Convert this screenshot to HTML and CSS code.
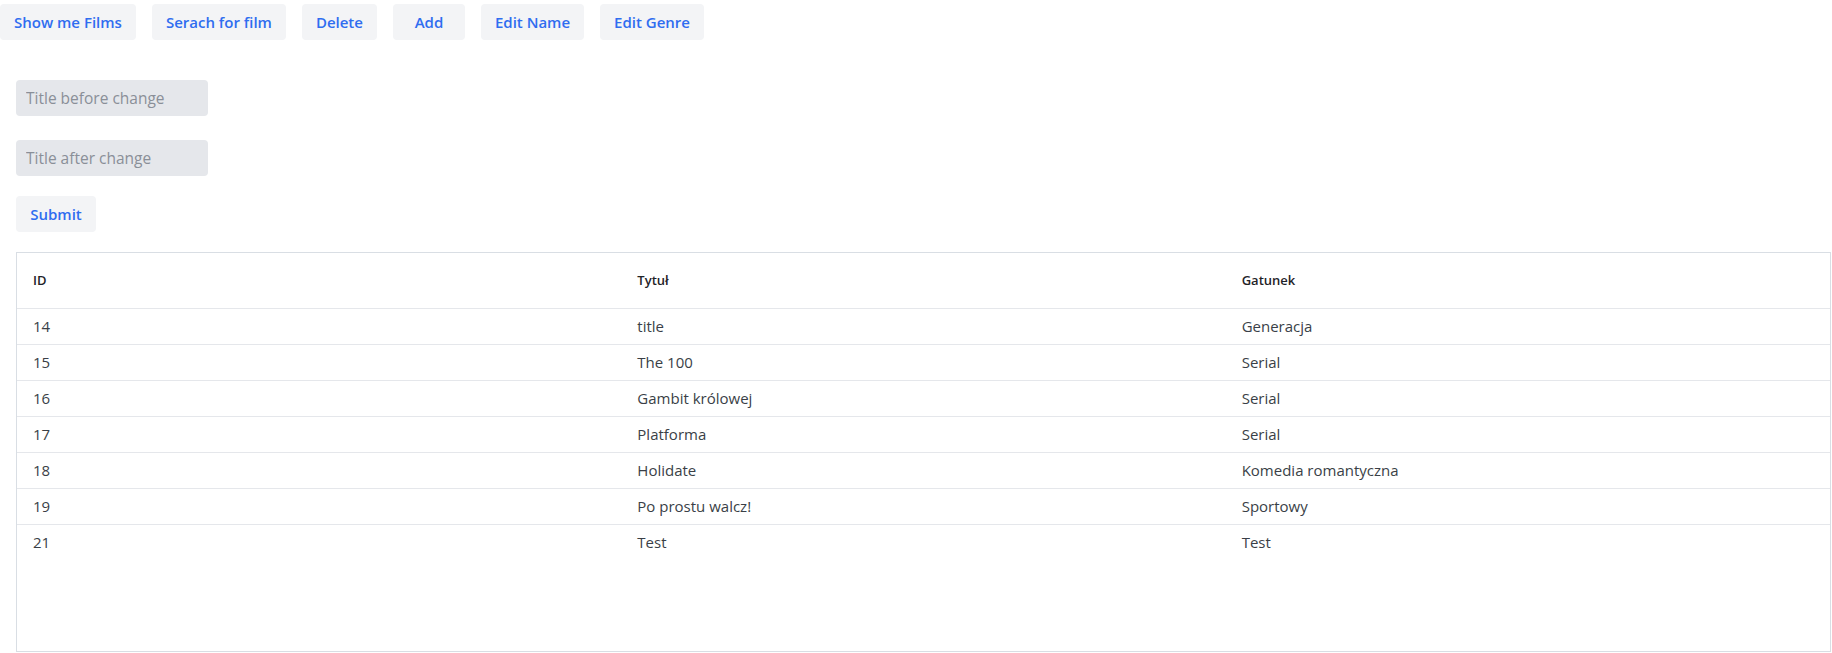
FILE: index.html
```html
<!DOCTYPE html>
<html lang="pl">
<head>
<meta charset="utf-8">
<title>Films</title>
<link rel="stylesheet" href="styles.css">
</head>
<body>
<nav class="toolbar">
  <button class="btn">Show me Films</button>
  <button class="btn">Serach for film</button>
  <button class="btn">Delete</button>
  <button class="btn btn-add">Add</button>
  <button class="btn">Edit Name</button>
  <button class="btn">Edit Genre</button>
</nav>
<main class="content">
  <form class="edit-form">
    <input class="field" type="text" placeholder="Title before change">
    <input class="field" type="text" placeholder="Title after change">
    <button class="btn submit" type="button">Submit</button>
  </form>
  <div class="table-box">
    <table class="films">
      <thead>
        <tr><th>ID</th><th>Tytuł</th><th>Gatunek</th></tr>
      </thead>
      <tbody>
        <tr><td>14</td><td>title</td><td>Generacja</td></tr>
        <tr><td>15</td><td>The 100</td><td>Serial</td></tr>
        <tr><td>16</td><td>Gambit królowej</td><td>Serial</td></tr>
        <tr><td>17</td><td>Platforma</td><td>Serial</td></tr>
        <tr><td>18</td><td>Holidate</td><td>Komedia romantyczna</td></tr>
        <tr><td>19</td><td>Po prostu walcz!</td><td>Sportowy</td></tr>
        <tr><td>21</td><td>Test</td><td>Test</td></tr>
      </tbody>
    </table>
  </div>
</main>
</body>
</html>
```
FILE: styles.css
```css
* { box-sizing: border-box; }
html, body { margin: 0; padding: 0; background: #fff; }
body {
  font-family: "Open Sans", "Noto Sans", "Liberation Sans", sans-serif;
  font-size: 15px;
  color: #374151;
}
.toolbar {
  display: flex;
  gap: 16px;
  padding-top: 4px;
}
.btn {
  height: 36px;
  padding: 0 14px;
  border: none;
  border-radius: 4px;
  background: #f3f4f6;
  color: #2f6df0;
  font-family: inherit;
  font-size: 15px;
  font-weight: 600;
  text-align: center;
  cursor: pointer;
}
.btn-add { min-width: 72px; }
.content {
  padding: 40px 1px 0 16px;
}
.edit-form {
  display: flex;
  flex-direction: column;
  align-items: flex-start;
}
.field {
  width: 192px;
  height: 36px;
  border: none;
  border-radius: 4px;
  background: #e5e7eb;
  padding: 0 10px;
  font-family: inherit;
  font-size: 15.5px;
  color: #374151;
  margin-bottom: 24px;
}
.field + .field { margin-bottom: 20px; }
.field::placeholder { color: #8a8f98; }
.submit { width: 80px; padding: 0; }
.table-box {
  margin-top: 20px;
  height: 400px;
  border: 1px solid #d9dee4;
}
.films {
  width: 100%;
  border-collapse: collapse;
  table-layout: fixed;
}
.films th {
  height: 55px;
  padding: 0 16px;
  text-align: left;
  font-size: 13px;
  font-weight: 600;
  color: #1f2328;
  vertical-align: middle;
}
.films td {
  height: 36px;
  padding: 0 16px;
  border-top: 1px solid #e5e7eb;
  vertical-align: middle;
  color: #3a3f47;
}
```
